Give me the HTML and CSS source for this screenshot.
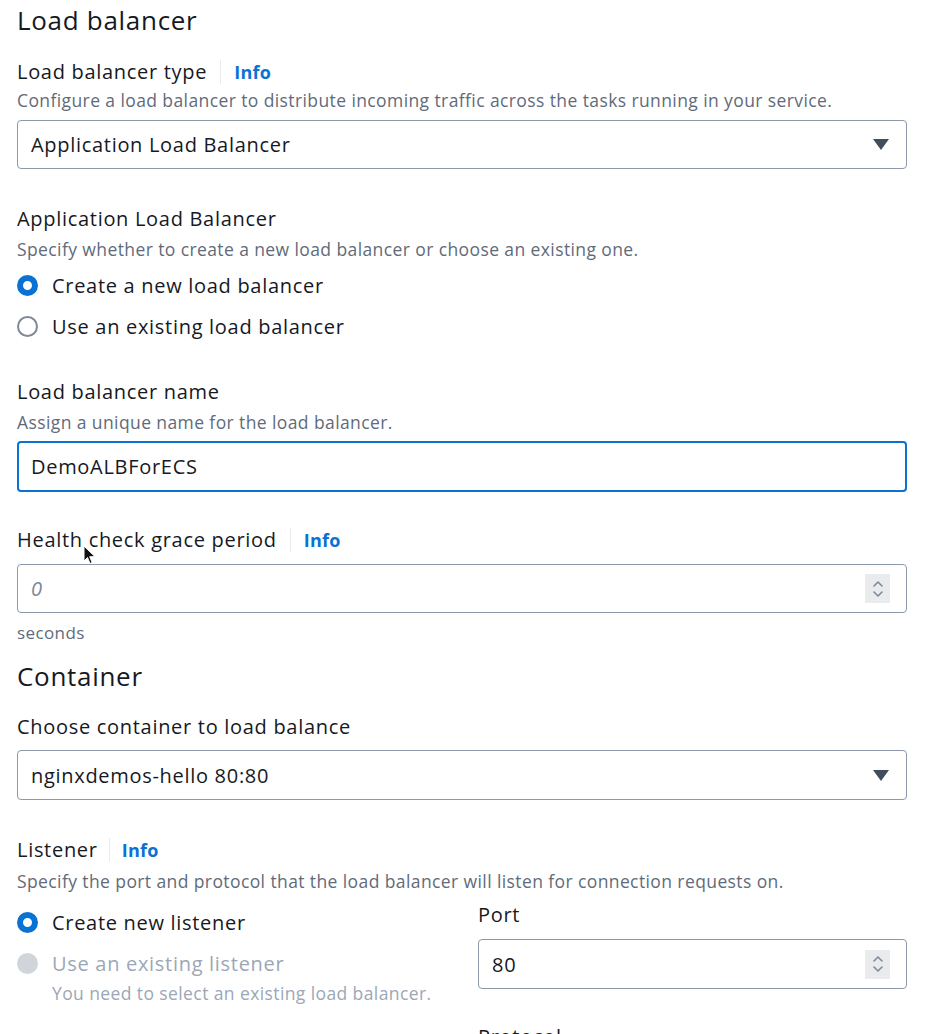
FILE: index.html
```html
<!DOCTYPE html>
<html>
<head>
<meta charset="utf-8">
<link rel="stylesheet" href="styles.css">
</head>
<body>
<div class="page">
  <h2 class="section-title">Load balancer</h2>

  <div class="label-row mt-21"><span class="label">Load balancer type</span><span class="divider"></span><a class="info">Info</a></div>
  <div class="desc">Configure a load balancer to distribute incoming traffic across the tasks running in your service.</div>
  <div class="select mt-7"><span>Application Load Balancer</span><svg class="caret" width="16" height="11" viewBox="0 0 16 11"><path d="M0 0h16L8 11z" fill="#414d5c"/></svg></div>

  <div class="label-row mt-36"><span class="label">Application Load Balancer</span></div>
  <div class="desc mt-3">Specify whether to create a new load balancer or choose an existing one.</div>
  <div class="radio-row mt-5"><span class="radio checked"></span><span class="radio-label">Create a new load balancer</span></div>
  <div class="radio-row mt-5"><span class="radio"></span><span class="radio-label">Use an existing load balancer</span></div>

  <div class="label-row mt-34"><span class="label">Load balancer name</span></div>
  <div class="desc mt-3">Assign a unique name for the load balancer.</div>
  <div class="input focused mt-6"><span>DemoALBForECS</span></div>

  <div class="label-row mt-34 cursor-host"><span class="label">Health check grace period</span><span class="divider"></span><a class="info">Info</a>
    <svg class="cursor" width="14" height="20" viewBox="0 0 14 20"><path d="M1 1v15l3.5-3.5 2.5 6 2.2-1-2.5-5.8H12z" fill="#111" stroke="#fff" stroke-width="1"/></svg>
  </div>
  <div class="input number mt-10"><span class="placeholder">0</span><span class="spinner"><svg width="12" height="20" viewBox="0 0 12 20"><path d="M2 7l4-4 4 4M2 13l4 4 4-4" fill="none" stroke="#7d8998" stroke-width="1.6" stroke-linecap="round" stroke-linejoin="round"/></svg></span></div>
  <div class="constraint mt-9">seconds</div>

  <h2 class="section-title mt-15">Container</h2>
  <div class="label-row mt-20"><span class="label">Choose container to load balance</span></div>
  <div class="select tall mt-9"><span>nginxdemos-hello 80:80</span><svg class="caret" width="16" height="11" viewBox="0 0 16 11"><path d="M0 0h16L8 11z" fill="#414d5c"/></svg></div>

  <div class="label-row mt-36"><span class="label">Listener</span><span class="divider narrow"></span><a class="info">Info</a></div>
  <div class="desc mt-4">Specify the port and protocol that the load balancer will listen for connection requests on.</div>

  <div class="listener-grid">
    <div class="col-left">
      <div class="radio-row mt-10"><span class="radio checked"></span><span class="radio-label">Create new listener</span></div>
      <div class="radio-row mt-5"><span class="radio disabled"></span><span class="radio-label disabled-text">Use an existing listener</span></div>
      <div class="radio-desc">You need to select an existing load balancer.</div>
    </div>
    <div class="col-right">
      <div class="label-row mt-7"><span class="label">Port</span></div>
      <div class="input number tall mt-10"><span class="value">80</span><span class="spinner"><svg width="12" height="20" viewBox="0 0 12 20"><path d="M2 7l4-4 4 4M2 13l4 4 4-4" fill="none" stroke="#7d8998" stroke-width="1.6" stroke-linecap="round" stroke-linejoin="round"/></svg></span></div>
      <div class="label-row mt-34"><span class="label">Protocol</span></div>
    </div>
  </div>
</div>
</body>
</html>
```

FILE: styles.css
```css
* { box-sizing: border-box; }
html, body { margin: 0; padding: 0; background: #fff; }
body {
  font-family: "Open Sans", "Noto Sans", sans-serif;
  color: #16191f;
  overflow: hidden;
}
.page {
  width: 941px;
  padding: 3px 34px 0 17px;
}
.section-title {
  margin: 0;
  font-size: 26px;
  font-weight: 400;
  line-height: 34px;
  letter-spacing: 0.7px;
}
.label-row {
  display: flex;
  align-items: center;
  height: 28px;
}
.label {
  font-size: 20px;
  line-height: 28px;
  letter-spacing: 0.7px;
}
.divider {
  width: 1px;
  height: 24px;
  background: #e9ebed;
  margin: 0 13px 0 13px;
}
.divider.narrow { margin: 0 12px 0 11px; }
.info {
  font-size: 18px;
  font-weight: 700;
  color: #0972d3;
  line-height: 28px;
  letter-spacing: 0.3px;
}
.desc {
  margin-top: 1px;
  font-size: 17.5px;
  line-height: 26px;
  color: #5f6b7a;
  letter-spacing: 0.4px;
}
.select, .input {
  display: flex;
  align-items: center;
  justify-content: space-between;
  height: 49px;
  border: 1.5px solid #8d99a8;
  border-radius: 4px;
  padding: 0 17px 0 13px;
  font-size: 20px;
  letter-spacing: 0.7px;
  background: #fff;
}
.select.tall, .input.tall { height: 50px; }
.caret { display: block; }
.input.focused {
  height: 51px;
  border: 2px solid #0972d3;
  padding-left: 12px;
}
.input.number { padding-right: 16px; }
.placeholder {
  font-style: italic;
  color: #7d8998;
}
.spinner {
  display: flex;
  align-items: center;
  justify-content: center;
  width: 25px;
  height: 29px;
  background: #e9ebed;
}
.spinner svg { display: block; }
.constraint {
  font-size: 17px;
  line-height: 22px;
  color: #5f6b7a;
  letter-spacing: 0.4px;
}
.radio-row {
  display: flex;
  align-items: center;
  height: 36px;
}
.radio {
  width: 21px;
  height: 21px;
  border-radius: 50%;
  border: 2px solid #7d8998;
  margin-right: 14px;
  flex: none;
}
.radio.checked {
  border: 6px solid #0972d3;
}
.radio.disabled {
  border: none;
  background: #d1d5db;
}
.radio-label {
  font-size: 20px;
  letter-spacing: 0.7px;
}
.disabled-text { color: #9ba7b6; }
.radio-desc {
  padding-left: 35px;
  font-size: 17.5px;
  line-height: 22px;
  color: #9ba7b6;
  letter-spacing: 0.4px;
  margin-top: 1px;
}
.listener-grid {
  display: grid;
  grid-template-columns: 445px 429px;
  column-gap: 16px;
}
.cursor-host { position: relative; }
.cursor { position: absolute; left: 66px; top: 19px; }
.mt-3 { margin-top: 3px; }
.mt-4 { margin-top: 4px; }
.mt-5 { margin-top: 5px; }
.mt-6 { margin-top: 6px; }
.mt-7 { margin-top: 7px; }
.mt-9 { margin-top: 9px; }
.mt-10 { margin-top: 10px; }
.mt-15 { margin-top: 15px; }
.mt-20 { margin-top: 20px; }
.mt-21 { margin-top: 21px; }
.mt-34 { margin-top: 34px; }
.mt-36 { margin-top: 36px; }
```
